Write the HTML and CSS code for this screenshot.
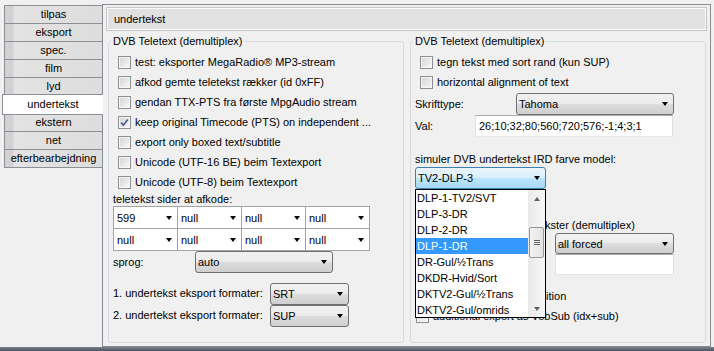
FILE: index.html
```html
<!DOCTYPE html>
<html>
<head>
<meta charset="utf-8">
<link rel="stylesheet" href="styles.css">
</head>
<body>
<div class="app">
  <div class="tabs">
    <div class="tab">tilpas</div>
    <div class="tab">eksport</div>
    <div class="tab">spec.</div>
    <div class="tab">film</div>
    <div class="tab">lyd</div>
    <div class="tab selected">undertekst</div>
    <div class="tab">ekstern</div>
    <div class="tab">net</div>
    <div class="tab">efterbearbejdning</div>
  </div>
  <div class="panel">
    <div class="header">undertekst</div>
    <div class="groups">
      <fieldset class="group">
        <legend>DVB Teletext (demultiplex)</legend>
        <div class="cbrow"><span class="cb"></span><span>test: eksporter MegaRadio® MP3-stream</span></div>
        <div class="cbrow"><span class="cb"></span><span>afkod gemte teletekst rækker (id 0xFF)</span></div>
        <div class="cbrow"><span class="cb"></span><span>gendan TTX-PTS fra første MpgAudio stream</span></div>
        <div class="cbrow"><span class="cb checked"><svg width="11" height="11" viewBox="0 0 11 11"><path d="M2.2 5.6 L4.4 8.2 L8.8 2.4" fill="none" stroke="#4a5f97" stroke-width="1.7"/></svg></span><span>keep original Timecode (PTS) on independent ...</span></div>
        <div class="cbrow"><span class="cb"></span><span>export only boxed text/subtitle</span></div>
        <div class="cbrow"><span class="cb"></span><span>Unicode (UTF-16 BE) beim Textexport</span></div>
        <div class="cbrow"><span class="cb"></span><span>Unicode (UTF-8) beim Textexport</span></div>
        <div class="line pages">teletekst sider at afkode:</div>
        <div class="pagegrid">
          <div class="cell"><span>599</span><i class="arrow"></i></div>
          <div class="cell"><span>null</span><i class="arrow"></i></div>
          <div class="cell"><span>null</span><i class="arrow"></i></div>
          <div class="cell"><span>null</span><i class="arrow"></i></div>
          <div class="cell"><span>null</span><i class="arrow"></i></div>
          <div class="cell"><span>null</span><i class="arrow"></i></div>
          <div class="cell"><span>null</span><i class="arrow"></i></div>
          <div class="cell"><span>null</span><i class="arrow"></i></div>
        </div>
        <div class="formrow">
          <span class="lbl w-sprog">sprog:</span>
          <div class="combo w-auto"><span>auto</span><i class="arrow"></i></div>
        </div>
        <div class="formrow first-fmt">
          <span class="lbl w-fmt">1. undertekst eksport formater:</span>
          <div class="combo w-fmtc"><span>SRT</span><i class="arrow"></i></div>
        </div>
        <div class="formrow">
          <span class="lbl w-fmt">2. undertekst eksport formater:</span>
          <div class="combo w-fmtc"><span>SUP</span><i class="arrow"></i></div>
        </div>
      </fieldset>
      <fieldset class="group">
        <legend>DVB Teletext (demultiplex)</legend>
        <div class="cbrow"><span class="cb"></span><span>tegn tekst med sort rand (kun SUP)</span></div>
        <div class="cbrow"><span class="cb"></span><span>horizontal alignment of text</span></div>
        <div class="formrow font-row">
          <span class="lbl w-font">Skrifttype:</span>
          <div class="combo w-fontc"><span>Tahoma</span><i class="arrow"></i></div>
        </div>
        <div class="formrow">
          <span class="lbl w-val">Val:</span>
          <div class="field w-valf">26;10;32;80;560;720;576;-1;4;3;1</div>
        </div>
        <div class="line sim">simuler DVB undertekst IRD farve model:</div>
        <div class="dropwrap">
          <div class="combo open"><span>TV2-DLP-3</span><i class="arrow"></i></div>
          <div class="popup">
            <div class="list">
              <div class="item">DLP-1-TV2/SVT</div>
              <div class="item">DLP-3-DR</div>
              <div class="item">DLP-2-DR</div>
              <div class="item sel">DLP-1-DR</div>
              <div class="item">DR-Gul/½Trans</div>
              <div class="item">DKDR-Hvid/Sort</div>
              <div class="item">DKTV2-Gul/½Trans</div>
              <div class="item">DKTV2-Gul/omrids</div>
            </div>
            <div class="sbar">
              <div class="sbtn"><i class="uparr"></i></div>
              <div class="track"><div class="thumb"><i></i><i></i><i></i></div></div>
              <div class="sbtn"><i class="dnarr"></i></div>
            </div>
          </div>
        </div>
        <div class="line forced">eksport forcerede undertekster (demultiplex)</div>
        <div class="combo w-forced"><span>all forced</span><i class="arrow"></i></div>
        <div class="field w-forced f2"></div>
        <div class="cbrow low pos"><span class="cb"></span><span>bevar original tekst position</span></div>
        <div class="cbrow low"><span class="cb"></span><span>additional export as VobSub (idx+sub)</span></div>
      </fieldset>
    </div>
  </div>
</div>
<div class="bottombar"></div>
</body>
</html>
```
FILE: styles.css
```css
* { box-sizing: border-box; }
html, body { margin: 0; }
body {
  background: #f0f0f0;
  font-family: "Liberation Sans", Arial, sans-serif;
  font-size: 11px;
  color: #000;
  width: 714px;
  height: 351px;
  overflow: hidden;
}
.app { display: flex; height: 347px; padding-top: 4px; }

/* tabs */
.tabs { width: 102px; padding-left: 2px; padding-top: 1px; display: flex; flex-direction: column; flex: none; }
.tab {
  height: 19px;
  margin-top: -1px;
  margin-left: 2px;
  border: 1px solid #8c8f96;
  border-right: none;
  background: linear-gradient(to right, #d2d2d2 0, #d2d2d2 8px, #e3e3e3 9px, #dddddd 100%);
  display: flex; align-items: center; justify-content: center;
  line-height: 13px;
  white-space: nowrap;
}
.tab:first-child { margin-top: 0; }
.tab.selected {
  background: #fff;
  margin-left: 0; margin-right: -1px;
  margin-top: -2px; margin-bottom: -1px;
  height: 21px;
  position: relative; z-index: 1;
}

/* panel */
.panel {
  width: 609px; height: 343px; flex: none;
  border: 1px solid #898c95;
  display: flex; flex-direction: column;
}
.header {
  height: 24px; margin: 2px 3px 0;
  border: 1px solid #c6c6c6;
  box-shadow: inset 0 0 0 1px #fafafa;
  background: #e1e1e1;
  padding-left: 7px;
  display: flex; align-items: center;
}
.groups { display: flex; gap: 6px; padding-left: 5px; margin-top: 4px; }
.group {
  width: 296px; height: 308px;
  margin: 0; padding: 4px 4px 0; min-width: 0;
  border: 1px solid #d5dbe0; border-radius: 3px;
  display: flex; flex-direction: column;
  position: relative;
}
legend { padding: 0 2px; margin-left: -2px; line-height: 13px; }

/* checkboxes */
.cbrow { height: 20px; display: flex; align-items: center; gap: 4px; padding-left: 5px; white-space: nowrap; flex: none; }
.cbrow.low { padding-left: 1px; }
.cbrow.pos { margin-top: 11px; }
.cb {
  width: 13px; height: 13px; flex: none;
  border: 1px solid #8e8f8f;
  background: linear-gradient(135deg, #d0d3d8 0%, #f4f4f4 85%);
  box-shadow: inset 0 0 0 1px #f6f6f6;
  display: flex; align-items: center; justify-content: center;
}
.cb svg { display: block; }

.line { line-height: 14px; height: 14px; white-space: nowrap; flex: none; }
.sim { margin-top: 15px; }
.forced { margin-top: 29px; padding-left: 4px; }

/* page grid */
.pagegrid {
  display: grid; grid-template-columns: repeat(4, 63px); grid-auto-rows: 21px;
  gap: 1px; padding: 1px; background: #a4a4a4;
  width: 257px; flex: none;
}
.cell { background: #fff; display: flex; align-items: center; justify-content: space-between; padding: 0 5px 0 3px; }

.arrow {
  display: block; width: 0; height: 0;
  border-left: 3.5px solid transparent; border-right: 3.5px solid transparent;
  border-top: 4px solid #000;
  flex: none;
}

.formrow { display: flex; align-items: center; height: 22px; flex: none; }
.first-fmt { margin-top: 10px; }
.font-row { margin-top: 1px; }
.lbl { flex: none; white-space: nowrap; }
.w-fmt { padding-bottom: 2px; }
.w-sprog { width: 82px; }
.w-fmt { width: 157px; }
.w-font { width: 101px; }
.w-val { width: 60px; }

.combo {
  height: 22px;
  border: 1px solid #707070; border-radius: 3px;
  background: linear-gradient(#f2f2f2 0%, #ebebeb 50%, #dddddd 50%, #cfcfcf 100%);
  display: flex; align-items: center; justify-content: space-between;
  padding: 0 5px 0 2px;
  flex: none;
}
.w-auto { width: 138px; }
.w-fmtc { width: 79px; }
.w-fontc { width: 158px; }
.combo.open {
  width: 131px; height: 22px;
  border-color: #3c7fb1;
  background: linear-gradient(#eaf6fd 0%, #d9f0fc 50%, #bee6fd 50%, #a7d9f5 100%);
}
.w-forced { width: 119px; margin-left: 140px; height: 21px; }
.combo.w-forced { margin-top: 1px; }

.field {
  height: 22px; background: #fff;
  border: 1px solid #abadb3; border-color: #abadb3 #dbdfe6 #e3e9ef #e2e3ea;
  padding-left: 3px;
  display: flex; align-items: center;
  white-space: nowrap; flex: none;
}
.w-valf { width: 198px; }
.field.f2 { height: 21px; }

/* open dropdown */
.dropwrap { position: relative; margin-top: 1px; width: 131px; flex: none; }
.popup {
  position: absolute; left: 0; top: 100%; z-index: 5;
  width: 131px; height: 129px;
  border: 1px solid #000; background: #fff;
  display: flex;
}
.list { flex: 1; overflow: hidden; }
.item { height: 16px; line-height: 16px; padding-left: 1px; white-space: nowrap; }
.item.sel { background: #3399ff; color: #fff; }
.sbar {
  width: 17px; flex: none;
  display: flex; flex-direction: column;
  background: linear-gradient(to right, #e9e9e9, #f7f7f7);
}
.sbtn { height: 17px; display: flex; align-items: center; justify-content: center; flex: none; }
.uparr { display: block; width: 0; height: 0; border-left: 3.5px solid transparent; border-right: 3.5px solid transparent; border-bottom: 4px solid #606060; }
.dnarr { display: block; width: 0; height: 0; border-left: 3.5px solid transparent; border-right: 3.5px solid transparent; border-top: 4px solid #606060; }
.track { flex: 1; }
.thumb {
  margin: 20px 1px 0; height: 31px;
  border: 1px solid #979797; border-radius: 2px;
  background: linear-gradient(to right, #f3f3f3, #e2e2e2);
  display: flex; flex-direction: column; align-items: center; justify-content: center; gap: 1px;
}
.thumb i { display: block; width: 6px; height: 1px; background: #606060; }

.bottombar { height: 4px; background: linear-gradient(#7b828a, #4b5561); }
```
